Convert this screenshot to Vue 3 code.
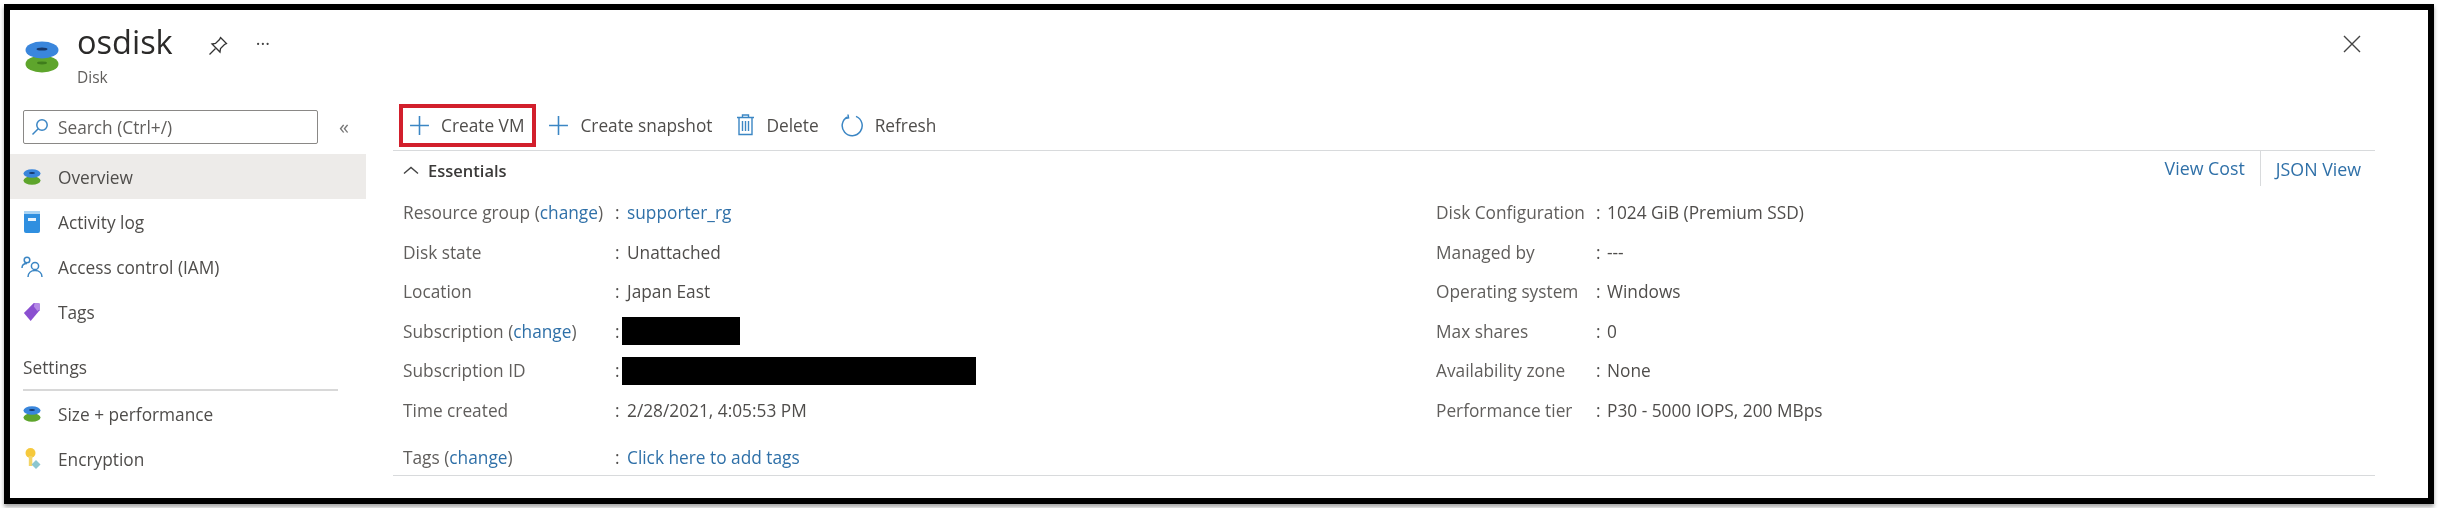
<script setup>
const menuTop = [
  { label: 'Overview', icon: 'disk', active: true },
  { label: 'Activity log', icon: 'log' },
  { label: 'Access control (IAM)', icon: 'iam' },
  { label: 'Tags', icon: 'tag' }
];
const menuSettings = [
  { label: 'Size + performance', icon: 'disk' },
  { label: 'Encryption', icon: 'key' }
];

const leftRows = [
  { label: 'Resource group', change: true, value: 'supporter_rg', link: true },
  { label: 'Disk state', value: 'Unattached' },
  { label: 'Location', value: 'Japan East' },
  { label: 'Subscription', change: true, redact: 'short' },
  { label: 'Subscription ID', redact: 'long' },
  { label: 'Time created', value: '2/28/2021, 4:05:53 PM' },
  { label: 'Tags', change: true, value: 'Click here to add tags', link: true, tags: true }
];
const rightRows = [
  { label: 'Disk Configuration', value: '1024 GiB (Premium SSD)' },
  { label: 'Managed by', value: '---' },
  { label: 'Operating system', value: 'Windows' },
  { label: 'Max shares', value: '0' },
  { label: 'Availability zone', value: 'None' },
  { label: 'Performance tier', value: 'P30 - 5000 IOPS, 200 MBps' }
];
</script>

<template>
  <div class="frame">
    <header class="head">
      <svg class="head-icon" viewBox="0 0 34 34">
        <ellipse cx="17" cy="24" rx="16.5" ry="8.5" fill="#5ea52c" />
        <ellipse cx="17" cy="23" rx="5" ry="1.4" fill="#3f7d1c" />
        <ellipse cx="17" cy="10" rx="16.5" ry="8.5" fill="#3a86dc" />
        <ellipse cx="17" cy="9" rx="5.5" ry="1.6" fill="#17386b" />
      </svg>
      <div class="head-text">
        <h1>osdisk</h1>
        <div class="sub">Disk</div>
      </div>
      <svg class="pin" viewBox="0 0 20 20" fill="none" stroke="#333" stroke-width="1.3">
        <path d="M12.5 1.5 18.5 7.5 16.5 8.5 12.5 12.5 12 16 4 8 7.5 7.5 11.5 3.5Z" />
        <path d="M7.5 12.5 1.5 18.5" />
      </svg>
      <span class="dots">···</span>
      <svg class="close" viewBox="0 0 18 18" fill="none" stroke="#444" stroke-width="1.4">
        <path d="M1 1 17 17M17 1 1 17" />
      </svg>
    </header>

    <div class="body">
      <aside class="side">
        <div class="search-row">
          <div class="search">
            <svg class="search-ico" viewBox="0 0 18 18" fill="none" stroke="#3b86c4" stroke-width="1.5">
              <circle cx="11" cy="7" r="5.2" />
              <path d="M7.2 10.8 1.5 16.5" />
            </svg>
            <span>Search (Ctrl+/)</span>
          </div>
          <span class="collapse">«</span>
        </div>

        <div v-for="m in menuTop" :key="m.label" class="item" :class="{ active: m.active }">
          <span class="item-ico">
            <svg v-if="m.icon === 'disk'" viewBox="0 0 18 22">
              <ellipse cx="9" cy="14.500" rx="8.5" ry="4.3" fill="#5ea52c" />
              <ellipse cx="9" cy="7.500" rx="8.5" ry="4.3" fill="#3a86dc" />
              <ellipse cx="9" cy="7" rx="3" ry="1" fill="#17386b" />
            </svg>
            <svg v-else-if="m.icon === 'log'" viewBox="0 0 18 22">
              <rect x="1" y="0" width="16" height="22" rx="2" fill="#2f8fe0" />
              <rect x="1" y="0" width="16" height="3" fill="#a9d3f3" />
              <rect x="5" y="7" width="8" height="3" fill="#e8f3fc" />
            </svg>
            <svg v-else-if="m.icon === 'iam'" class="wide" viewBox="0 0 22 22" fill="none" stroke="#3b86c4" stroke-width="1.5">
              <circle cx="6" cy="4" r="2.8" />
              <path d="M1 12c0-3 2-4.500 5-4.500" />
              <circle cx="14" cy="10" r="3.6" />
              <path d="M7 21c0-4 3-6.500 7-6.500s7 2.500 7 6.500" />
            </svg>
            <svg v-else-if="m.icon === 'tag'" viewBox="0 0 20 22">
              <path d="M12 1 18.500 1.500 18.500 9 8.500 21 1 12Z" fill="#8a4fd0" />
              <path d="M13 1 18.500 1.500 18.500 8 16 10 12 5Z" fill="#b58ae6" />
            </svg>
          </span>
          <span class="item-text">{{ m.label }}</span>
        </div>

        <div class="group">Settings</div>

        <div v-for="m in menuSettings" :key="m.label" class="item">
          <span class="item-ico">
            <svg v-if="m.icon === 'disk'" viewBox="0 0 18 22">
              <ellipse cx="9" cy="14.500" rx="8.5" ry="4.3" fill="#5ea52c" />
              <ellipse cx="9" cy="7.500" rx="8.5" ry="4.3" fill="#3a86dc" />
              <ellipse cx="9" cy="7" rx="3" ry="1" fill="#17386b" />
            </svg>
            <svg v-else viewBox="0 0 18 22">
              <circle cx="7.500" cy="5" r="5" fill="#f6c93c" />
              <rect x="5.800" y="8" width="3.500" height="10" fill="#f2d568" />
              <path d="M13 12 17.500 16.500 13 21 8.500 16.500Z" fill="#8cc6cf" />
            </svg>
          </span>
          <span class="item-text">{{ m.label }}</span>
        </div>
      </aside>

      <main class="main">
        <div class="toolbar">
          <button class="tool first">
            <svg class="plus" viewBox="0 0 20 20" fill="none" stroke="#3b86c4" stroke-width="1.5"><path d="M10 1V19M1 10H19" /></svg>
            Create VM
          </button>
          <button class="tool">
            <svg class="plus" viewBox="0 0 20 20" fill="none" stroke="#3b86c4" stroke-width="1.5"><path d="M10 1V19M1 10H19" /></svg>
            Create snapshot
          </button>
          <button class="tool">
            <svg class="trash" viewBox="0 0 19 22" fill="none" stroke="#3b86c4" stroke-width="1.4">
              <path d="M1 3.500H18M6.500 3.500V1H12.500V3.500M3 3.500V20.500H16V3.500M6.500 7V17M9.500 7V17M12.500 7V17" />
            </svg>
            Delete
          </button>
          <button class="tool last">
            <svg class="refresh" viewBox="0 0 23 23" fill="none" stroke="#3b86c4" stroke-width="1.5">
              <path d="M15 2.400A10 10 0 1 1 6.500 2.800" />
              <path d="M7 0.500 7.500 3.800 4 4.500" />
            </svg>
            Refresh
          </button>
        </div>

        <div class="ess-head">
          <span class="ess-title">
            <svg class="chev" viewBox="0 0 16 9" fill="none" stroke="#444" stroke-width="1.4"><path d="M1 7.500 8 1.500 15 7.500" /></svg>
            Essentials
          </span>
          <span class="ess-links">
            <a class="cost">View Cost</a>
            <a class="json">JSON View</a>
          </span>
        </div>

        <div class="cols">
          <div class="col left">
            <div v-for="r in leftRows" :key="r.label" class="row" :class="{ tags: r.tags }">
              <span class="lbl">{{ r.label }}<template v-if="r.change"> (<a>change</a>)</template></span>
              <span class="colon">:</span>
              <span v-if="r.redact" class="redact" :class="r.redact"></span>
              <a v-else-if="r.link">{{ r.value }}</a>
              <span v-else class="val">{{ r.value }}</span>
            </div>
          </div>
          <div class="col right">
            <div v-for="r in rightRows" :key="r.label" class="row">
              <span class="lbl">{{ r.label }}</span>
              <span class="colon">:</span>
              <span class="val">{{ r.value }}</span>
            </div>
          </div>
        </div>
      </main>
    </div>
  </div>
</template>

<style>
html, body { margin: 0; background: #fff; }
</style>

<style scoped>
.frame { box-sizing: border-box; width: 2430px; height: 500px; margin: 4px; border: 6px solid #000; box-shadow: 0 3px 4px rgba(0,0,0,0.35); font-family: 'Open Sans', 'Liberation Sans', sans-serif; font-size: 17.300px; color: #4f4d4b; overflow: hidden; background: #fff; filter: blur(0.5px); }

.head { height: 90px; display: flex; align-items: flex-start; position: relative; }
.head-icon { width: 34px; height: 34px; margin: 30px 0 0 15px; }
.head-text { margin: 10px 0 0 18px; }
h1 { margin: 0; font-size: 32.500px; line-height: 44px; font-weight: 400; color: #2b2a29; }
.sub { font-size: 15.500px; line-height: 20px; margin-top: 3px; color: #605e5c; }
.pin { width: 20px; height: 20px; margin: 26px 0 0 35px; }
.dots { margin: 19px 0 0 28px; font-size: 18px; line-height: 28px; color: #444; }
.close { width: 18px; height: 18px; position: absolute; right: 67px; top: 25px; }

.body { display: flex; }
.side { width: 356px; flex: none; }
.search-row { display: flex; align-items: center; padding: 10px 0 10px 13px; }
.search { box-sizing: border-box; width: 295px; height: 34px; border: 1.5px solid #8a8886; border-radius: 2px; display: flex; align-items: center; gap: 9px; padding-left: 7px; color: #605e5c; }
.search-ico { width: 18px; height: 18px; }
.collapse { margin-left: 21px; font-size: 20px; color: #777; line-height: 34px; }
.item { height: 45px; display: flex; align-items: center; padding-left: 13px; }
.item.active { background: #edebe9; }
.item-text { padding-top: 2px; }
.item-ico { width: 35px; flex: none; display: flex; }
.item-ico svg { width: 18px; height: 22px; }
.item-ico svg.wide { width: 22px; margin-left: -2px; }
.group { margin: 12px 28px 0 13px; height: 43px; line-height: 44px; border-bottom: 2px solid #d8d8d8; color: #4f4d4b; }

.main { width: 1982px; margin-left: 27px; }
.toolbar { height: 50px; display: flex; align-items: center; border-bottom: 1.5px solid #d8dadc; padding-left: 6px; gap: 2px; }
.tool { display: flex; align-items: center; height: 43px; border: 4px solid transparent; background: none; font: inherit; color: #4f4d4b; padding: 0 8px 0 6px; gap: 11px; white-space: nowrap; }
.tool.first { border-color: #d21f2c; }
.tool.last { margin-left: -2px; }
.plus { width: 21px; height: 21px; }
.trash { width: 19px; height: 22px; }
.refresh { width: 23px; height: 23px; }

.ess-head { height: 38px; display: flex; align-items: center; justify-content: space-between; padding-left: 10px; }
.ess-title { display: flex; align-items: center; gap: 9px; color: #3b3a39; font-weight: 600; font-size: 16.500px; }
.chev { width: 16px; height: 9px; }
.ess-links { display: flex; height: 35px; align-self: flex-start; align-items: center; margin-right: 14px; font-size: 17.800px; }
.cost { padding-right: 15px; border-right: 1.5px solid #d8dadc; line-height: 35px; }
.json { padding-left: 15px; }
a { color: #2f70a8; }

.cols { display: flex; border-bottom: 1.500px solid #d8dadc; padding: 4px 0 0 10px; height: 287px; box-sizing: border-box; }
.col.left { width: 1033px; }
.row { display: grid; grid-template-columns: 212px 12px 1fr; height: 39.500px; align-items: center; white-space: nowrap; }
.row.tags { margin-top: 8px; }
.lbl { color: #605e5c; }
.val { color: #4f4d4b; }
.right .row { grid-template-columns: 160px 11px 1fr; }
.redact { display: block; height: 28px; background: #000; margin-left: -5px; }
.redact.short { width: 118px; }
.redact.long { width: 354px; }
</style>
